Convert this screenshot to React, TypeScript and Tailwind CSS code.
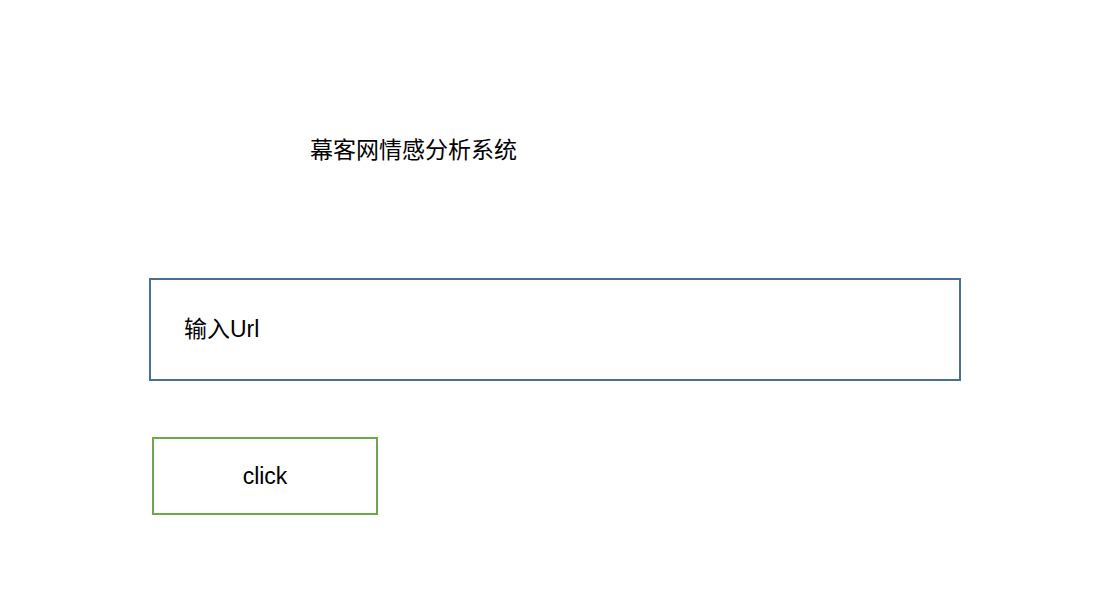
import React from 'react'

export default function App() {
  return (
    <div
      className="min-h-screen w-full bg-white pl-[149px] pt-[135px] text-black"
      style={{ fontFamily: '"Liberation Sans", "Noto Sans CJK SC", sans-serif' }}
    >
      <h1 className="ml-[161px] text-[23px] leading-[31px] font-normal">幕客网情感分析系统</h1>
      <div className="mt-[112px] flex h-[103px] w-[812px] items-center border-2 border-[#4a6f91] pl-[33px] text-[23px]">
        输入Url
      </div>
      <button className="ml-[3px] mt-[56px] flex h-[78px] w-[226px] items-center justify-center border-2 border-[#70a64c] text-[23px]">
        click
      </button>
    </div>
  )
}
